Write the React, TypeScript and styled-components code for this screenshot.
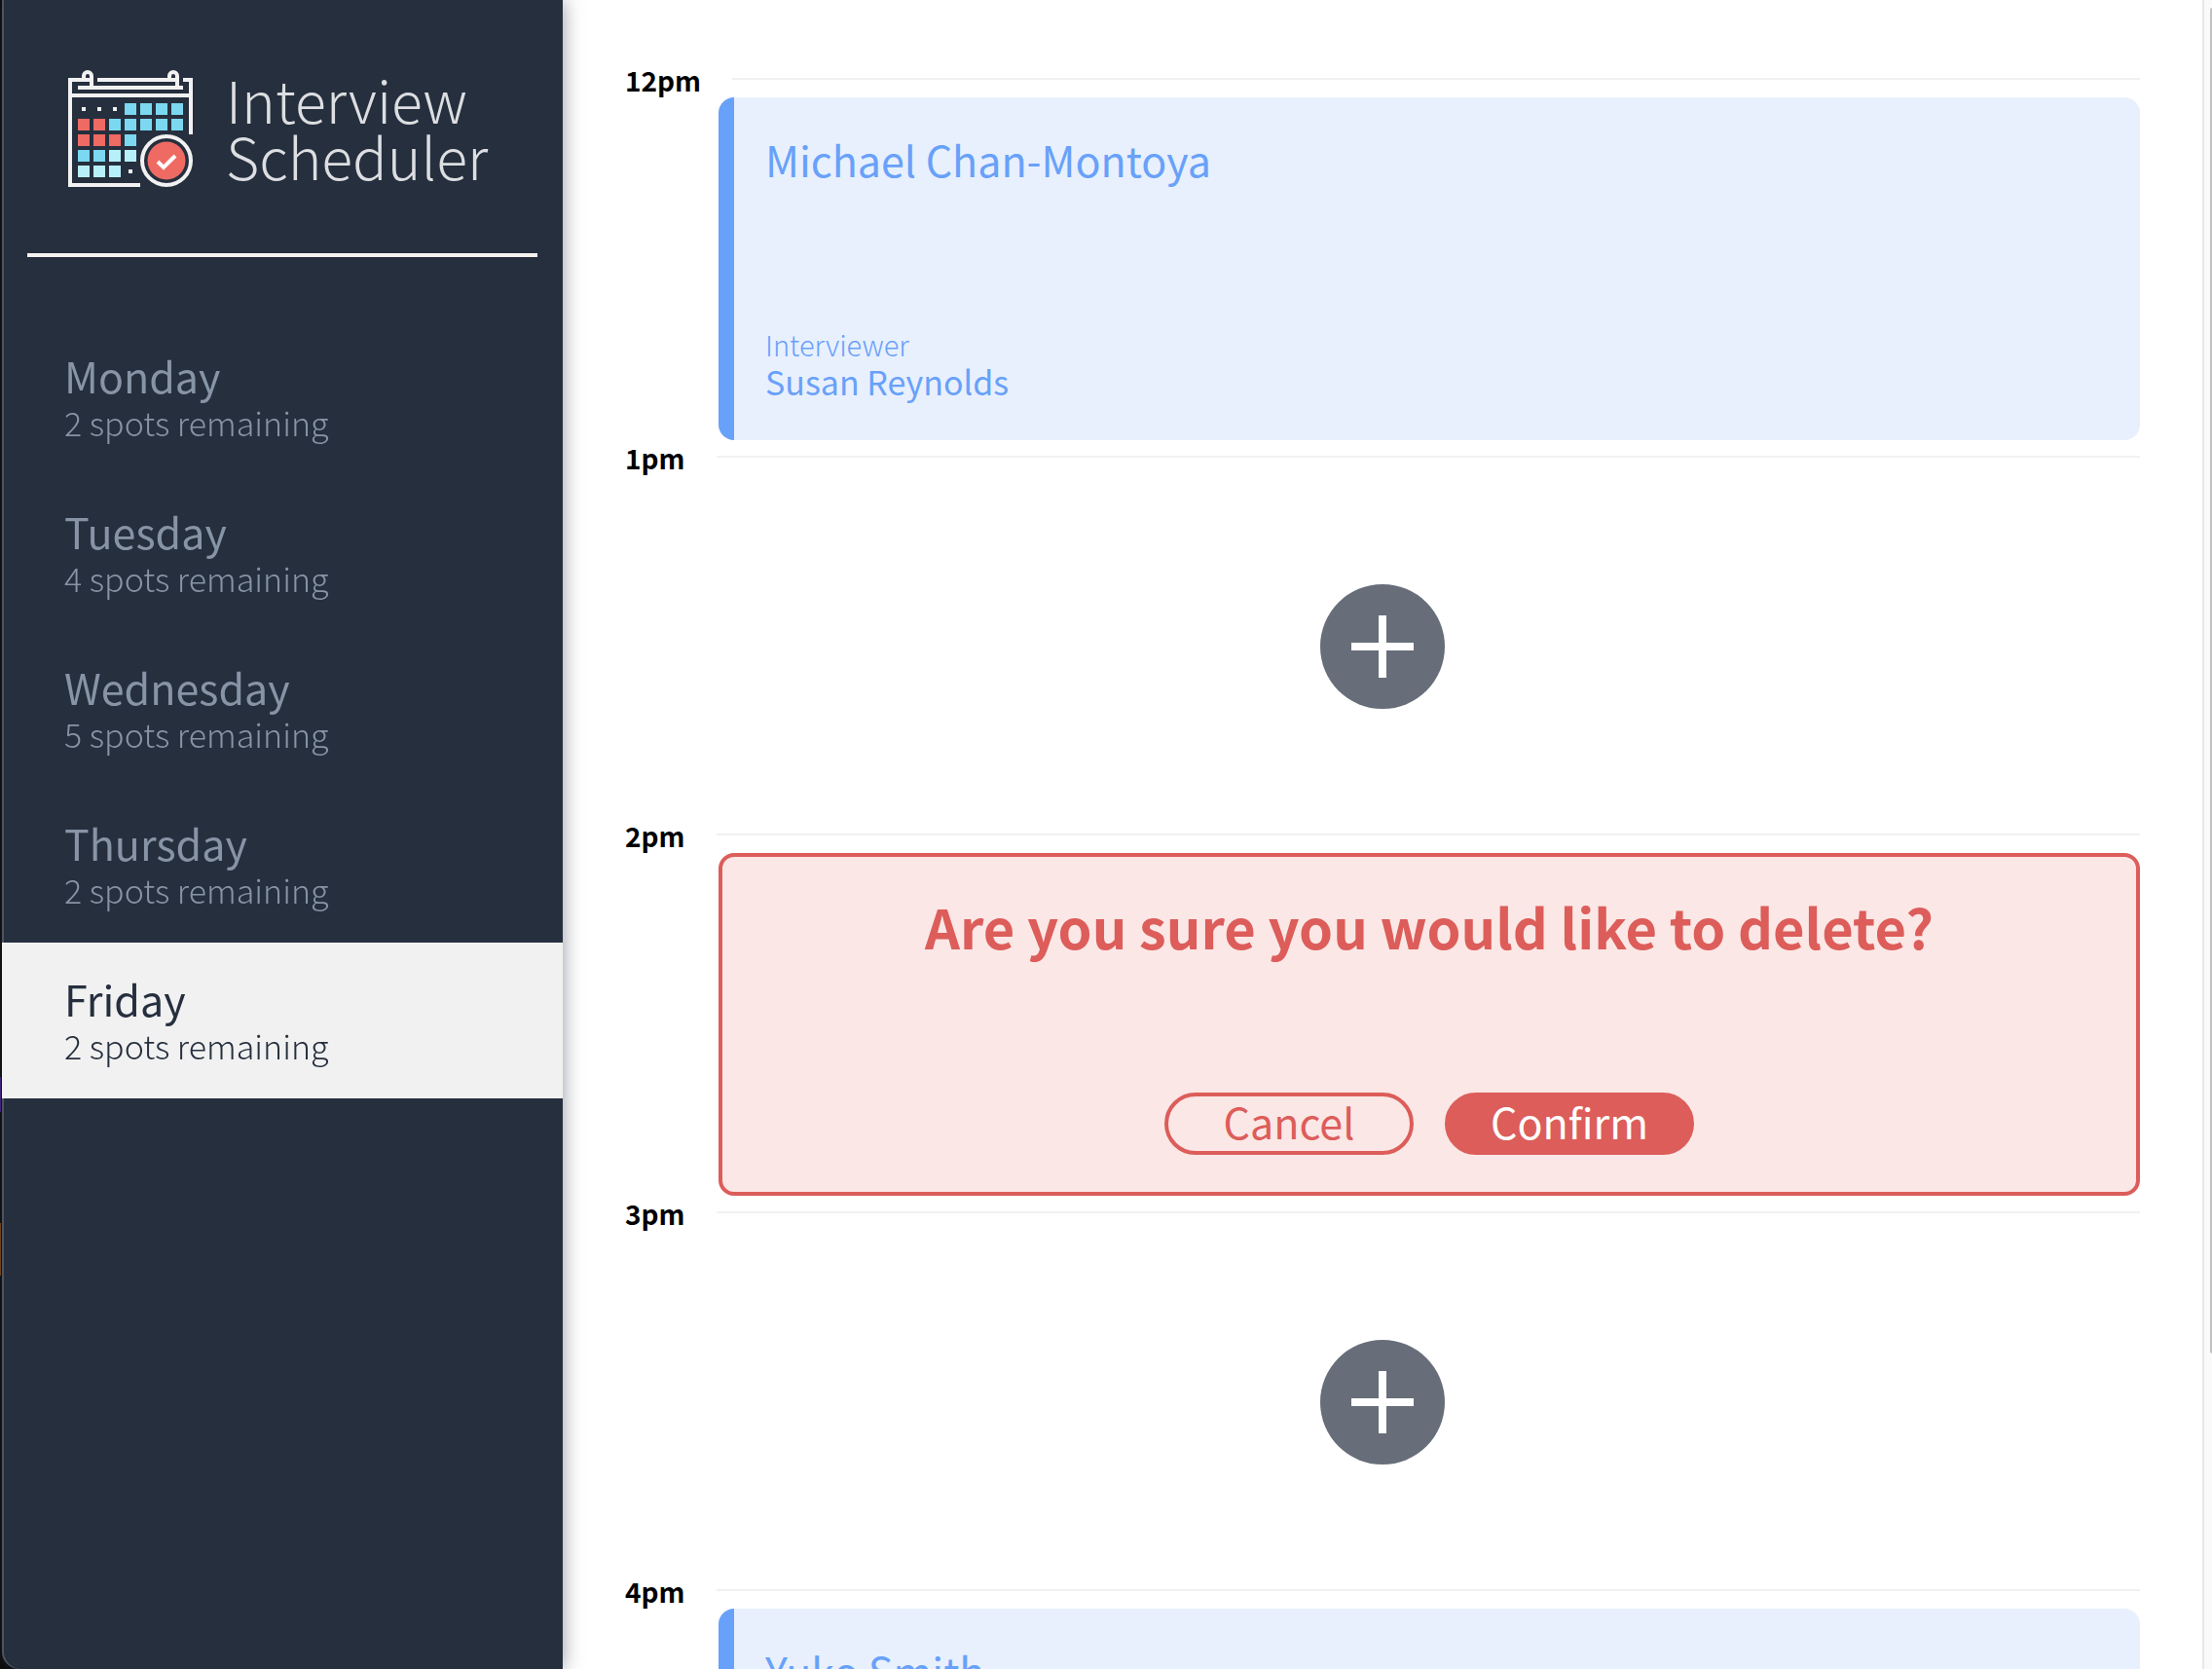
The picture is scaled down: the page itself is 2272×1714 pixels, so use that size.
import React, { useState } from "react";
import styled, { createGlobalStyle } from "styled-components";

const GlobalStyle = createGlobalStyle`
  * { box-sizing: border-box; }
  body {
    margin: 0;
    background: #ffffff;
    font-family: "Noto Sans CJK SC", "Noto Sans CJK JP", "Open Sans", sans-serif;
    font-weight: 400;
  }
  button { font-family: inherit; }
`;

const color = {
  navy: "#262f3e",
  slate: "#8794a6",
  active: "#f1f1f1",
  blue: "#68a1f9",
  paleBlue: "#e8f0fd",
  red: "#dc5d5a",
  paleRed: "#fbe7e5",
};

const Desktop = styled.div`
  display: flex;
  height: 100vh;
  overflow: hidden;
  padding-left: 2px;
  background:
    linear-gradient(#4a1f8f, #4a1f8f) 0 1106px / 1px 36px no-repeat,
    linear-gradient(#8a4a12, #8a4a12) 0 1256px / 1px 54px no-repeat,
    linear-gradient(90deg, #0b0b0b 30px, #ffffff 30px);
`;

const Sidebar = styled.section`
  flex: 0 0 576px;
  display: flex;
  flex-direction: column;
  background: ${color.navy};
  border-bottom-left-radius: 18px;
  box-shadow: inset 2px 0 0 #4d545f, 0 0 20px rgba(38, 47, 62, 0.5);
  z-index: 1;
`;

const Logo = styled.div`
  display: flex;
  align-items: center;
  gap: 32px;
  padding: 4px 48px 0 66px;
  height: 260px;
`;

const Wordmark = styled.h1`
  margin: 0;
  padding-bottom: 2px;
  font-size: 59px;
  line-height: 58px;
  font-weight: 300;
  color: #dcdee1;
`;

const Divider = styled.hr`
  flex: none;
  height: 4px;
  margin: 0 26px 64px;
  border: 0;
  background: #f6f2f0;
`;

const DayList = styled.ul`
  margin: 0;
  padding: 0;
  list-style: none;
`;

const DayButton = styled.button<{ $active: boolean }>`
  display: block;
  width: 100%;
  height: 160px;
  padding: 28px 64px 34px;
  border: 0;
  text-align: left;
  cursor: pointer;
  position: relative;
  color: ${(p) => (p.$active ? color.navy : color.slate)};
  background: ${(p) => (p.$active ? color.active : "transparent")};
`;

const DayName = styled.span`
  display: block;
  font-size: 43px;
  line-height: 58px;
`;

const DaySpots = styled.span`
  display: block;
  font-size: 34px;
  line-height: 40px;
  font-weight: 300;
`;

const Schedule = styled.main`
  flex: 1;
  min-width: 0;
  padding: 64px 64px 0;
  overflow-y: auto;
  scrollbar-width: none;
  background: #ffffff;
`;

const Slot = styled.article`
  display: flex;
  flex-direction: column;
  gap: 2px;
`;

const SlotHeader = styled.header`
  display: flex;
  align-items: center;
  gap: 32px;
`;

const SlotTime = styled.h4`
  margin: 0;
  padding-top: 2px;
  font-size: 28px;
  line-height: 32px;
  font-weight: 700;
  color: #000000;
`;

const SlotRule = styled.hr`
  flex: 1;
  height: 2px;
  margin: 0;
  border: 0;
  background: #f1f1f1;
`;

const Card = styled.section`
  display: flex;
  flex-direction: column;
  justify-content: space-between;
  height: 352px;
  margin-left: 96px;
  border-radius: 16px;
`;

const Booking = styled(Card)`
  padding: 32px 32px 40px;
  border-left: 16px solid ${color.blue};
  background: ${color.paleBlue};
  color: ${color.blue};
`;

const Student = styled.h2`
  margin: 0;
  font-size: 43px;
  line-height: 62px;
  font-weight: 400;
`;

const InterviewerLabel = styled.h4`
  margin: 0;
  font-size: 29px;
  line-height: 38px;
  font-weight: 300;
`;

const InterviewerName = styled.h3`
  margin: 0;
  font-size: 34px;
  line-height: 40px;
  font-weight: 400;
`;

const Confirmation = styled(Card)`
  align-items: center;
  padding: 36px 32px 38px;
  border: 4px solid ${color.red};
  background: ${color.paleRed};
  color: ${color.red};
`;

const Question = styled.h1`
  margin: 0;
  font-size: 56px;
  line-height: 70px;
  font-weight: 700;
`;

const Actions = styled.div`
  display: flex;
  gap: 32px;
`;

const ActionButton = styled.button<{ $solid?: boolean }>`
  display: flex;
  align-items: center;
  justify-content: center;
  width: 256px;
  height: 64px;
  padding: 0 0 6px;
  border: 4px solid ${color.red};
  border-radius: 32px;
  font-size: 43px;
  line-height: 50px;
  cursor: pointer;
  color: ${(p) => (p.$solid ? "#ffffff" : color.red)};
  background: ${(p) => (p.$solid ? color.red : "transparent")};
`;

const EmptySlot = styled.section`
  display: flex;
  align-items: center;
  justify-content: center;
  height: 352px;
`;

const AddButton = styled.button`
  display: flex;
  padding: 0;
  border: 0;
  border-radius: 50%;
  background: none;
  cursor: pointer;
`;

const ScrollTrack = styled.div`
  flex: 0 0 10px;
  padding: 8px 0 0 6px;
  border-left: 2px solid #e8e8e8;
  background: #fafafa;
`;

const ScrollThumb = styled.div`
  height: 81%;
  border-top-left-radius: 2px;
  border-bottom-left-radius: 2px;
  background: #c1c1c1;
`;

const gridRows = ["...bbbb", "rrbbbbb", "rrrb", "bbll", "lll."];
const gridFill: Record<string, string> = { b: "#7bd8f0", r: "#ee6a62", l: "#b8f0fa" };

function CalendarIcon() {
  return (
    <svg width="132" height="128" viewBox="68 68 132 128" aria-hidden="true">
      <g fill="none" stroke="#f1f1f1" strokeWidth="4">
        <path d="M144 190H72V82H94M86 82V78a4 4 0 0 1 8 0V90M80 90H188M100 82H182M174 82V78a4 4 0 0 1 8 0V90M188 82H196V138M72 98H196" />
        <circle cx="171" cy="165" r="25" />
      </g>
      {gridRows.flatMap((row, r) =>
        row.split("").map((cell, c) =>
          cell === "." ? (
            <rect key={`${r}-${c}`} x={84 + c * 16} y={110 + r * 16} width="4" height="4" fill="#f1f1f1" />
          ) : (
            <rect key={`${r}-${c}`} x={80 + c * 16} y={106 + r * 16} width="12" height="12" fill={gridFill[cell]} />
          )
        )
      )}
      <circle cx="171" cy="165" r="19.5" fill="#ee6a62" />
      <path d="M162 166L168 172L180 160" fill="none" stroke="#ffffff" strokeWidth="4" />
    </svg>
  );
}

function PlusIcon() {
  return (
    <svg width="128" height="128" viewBox="0 0 128 128" aria-hidden="true">
      <circle cx="64" cy="64" r="64" fill="#676e79" />
      <path d="M64 32V96M32 64H96" stroke="#ffffff" strokeWidth="8" />
    </svg>
  );
}

const days = [
  { name: "Monday", spots: 2 },
  { name: "Tuesday", spots: 4 },
  { name: "Wednesday", spots: 5 },
  { name: "Thursday", spots: 2 },
  { name: "Friday", spots: 2 },
];

type Appointment = {
  time: string;
  mode: "booked" | "empty" | "confirm";
  student?: string;
  interviewer?: string;
};

const appointments: Appointment[] = [
  { time: "12pm", mode: "booked", student: "Michael Chan-Montoya", interviewer: "Susan Reynolds" },
  { time: "1pm", mode: "empty" },
  { time: "2pm", mode: "confirm" },
  { time: "3pm", mode: "empty" },
  { time: "4pm", mode: "booked", student: "Yuko Smith" },
];

function AppointmentSlot({ time, mode, student, interviewer }: Appointment) {
  return (
    <Slot>
      <SlotHeader>
        <SlotTime>{time}</SlotTime>
        <SlotRule />
      </SlotHeader>
      {mode === "booked" && (
        <Booking>
          <Student>{student}</Student>
          {interviewer && (
            <div>
              <InterviewerLabel>Interviewer</InterviewerLabel>
              <InterviewerName>{interviewer}</InterviewerName>
            </div>
          )}
        </Booking>
      )}
      {mode === "empty" && (
        <EmptySlot>
          <AddButton type="button" aria-label="Add">
            <PlusIcon />
          </AddButton>
        </EmptySlot>
      )}
      {mode === "confirm" && (
        <Confirmation>
          <Question>Are you sure you would like to delete?</Question>
          <Actions>
            <ActionButton type="button">Cancel</ActionButton>
            <ActionButton type="button" $solid>
              Confirm
            </ActionButton>
          </Actions>
        </Confirmation>
      )}
    </Slot>
  );
}

export default function App() {
  const [day, setDay] = useState("Friday");
  return (
    <>
      <GlobalStyle />
      <Desktop>
        <Sidebar>
          <Logo>
            <CalendarIcon />
            <Wordmark>
              Interview
              <br />
              Scheduler
            </Wordmark>
          </Logo>
          <Divider />
          <nav>
            <DayList>
              {days.map((d) => (
                <li key={d.name}>
                  <DayButton type="button" $active={d.name === day} onClick={() => setDay(d.name)}>
                    <DayName>{d.name}</DayName>
                    <DaySpots>{d.spots} spots remaining</DaySpots>
                  </DayButton>
                </li>
              ))}
            </DayList>
          </nav>
        </Sidebar>
        <Schedule>
          {appointments.map((a) => (
            <AppointmentSlot key={a.time} {...a} />
          ))}
        </Schedule>
        <ScrollTrack>
          <ScrollThumb />
        </ScrollTrack>
      </Desktop>
    </>
  );
}
